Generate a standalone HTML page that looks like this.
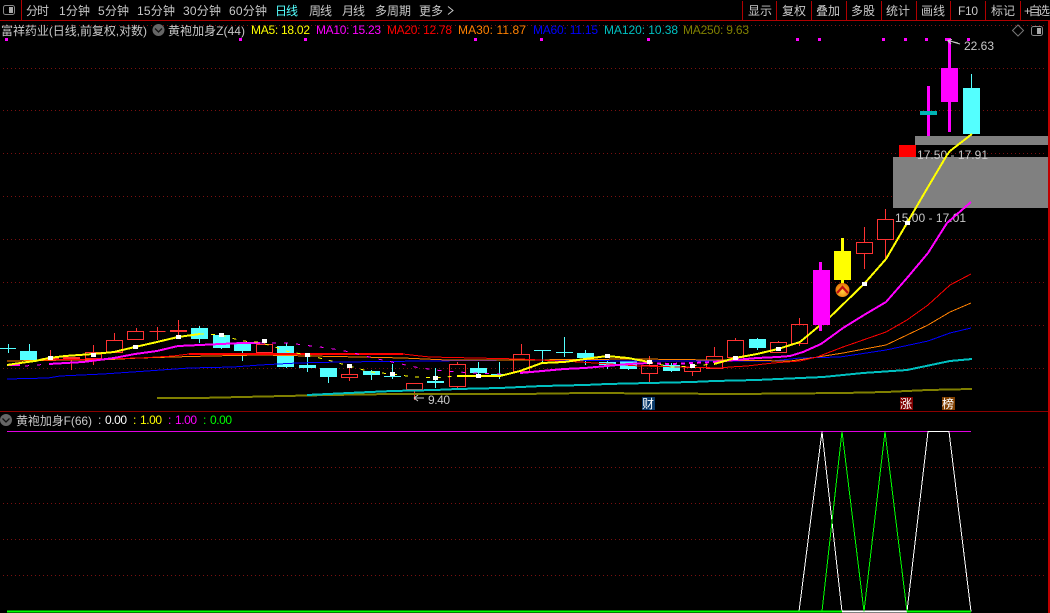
<!DOCTYPE html>
<html><head><meta charset="utf-8"><style>
html,body{margin:0;padding:0;background:#000;width:1050px;height:613px;overflow:hidden}
svg{position:absolute;left:0;top:0}
text{font-family:"Liberation Sans","WenQuanYi Zen Hei","Noto Sans CJK SC",sans-serif;font-size:12px;fill:#c8c8c8}
.m{font-size:12px}
</style></head><body>
<svg width="1050" height="613" viewBox="0 0 1050 613" xmlns="http://www.w3.org/2000/svg">
<g shape-rendering="crispEdges" fill="none">
<g stroke-width="1" stroke-dasharray="1 3">
<path d="M3 25.5H1046M3 68.5H1046M3 110.5H1046M3 153.5H1046M3 196.5H1046M3 239.5H1046M3 282.5H1046M3 325.5H1046M3 368.5H1046M3 467.5H1046M3 503.5H1046M3 539.5H1046M3 575.5H1046" stroke="#7a1010"/>
</g>
<path d="M0 20.5H1048M21.5 0V20M742.5 1V20M776.5 1V20M811.5 1V20M846.5 1V20M881.5 1V20M916.5 1V20M950.5 1V20M985.5 1V20M1020.5 1V20" stroke="#b00000"/>
<path d="M0 411.5H1048" stroke="#8c0000"/>
<rect x="1048" y="20" width="2" height="593" fill="#c00000"/>
</g>
<!-- toolbar -->
<g>
<rect x="3.5" y="5.5" width="11" height="9" rx="2" fill="none" stroke="#888"/><rect x="9" y="7" width="4" height="6" fill="#aaa"/>
<text x="26" y="15" textLength="23">分时</text>
<text x="59" y="15" textLength="31">1分钟</text>
<text x="98" y="15" textLength="31">5分钟</text>
<text x="137" y="15" textLength="38">15分钟</text>
<text x="183" y="15" textLength="38">30分钟</text>
<text x="229" y="15" textLength="38">60分钟</text>
<text x="275" y="15" textLength="23" style="fill:#54ffff">日线</text>
<text x="309" y="15" textLength="23">周线</text>
<text x="342" y="15" textLength="23">月线</text>
<text x="375" y="15" textLength="36">多周期</text>
<text x="419" y="15" textLength="24">更多</text>
<path d="M448 6.5L453 10.5L448 14.5" fill="none" stroke="#c8c8c8"/>
<text x="748" y="15" textLength="24">显示</text>
<text x="782" y="15" textLength="24">复权</text>
<text x="816" y="15" textLength="24">叠加</text>
<text x="851" y="15" textLength="24">多股</text>
<text x="886" y="15" textLength="24">统计</text>
<text x="921" y="15" textLength="24">画线</text>
<text x="958" y="15" textLength="20">F10</text>
<text x="991" y="15" textLength="24">标记</text>
<text x="1024" y="15" textLength="26">+自选</text>
</g>
<!-- info -->
<g>
<text x="1" y="35" textLength="146">富祥药业(日线,前复权,对数)</text>
<circle cx="158.5" cy="30" r="6" fill="#666"/><path d="M155 28.5L158.5 32L162 28.5" fill="none" stroke="#111" stroke-width="1.3"/>
<text x="168" y="35" textLength="77">黄袍加身Z(44)</text>
<text class="m" x="251" y="34" textLength="59" style="fill:#ffff00">MA5: 18.02</text>
<text class="m" x="316" y="34" textLength="65" style="fill:#ff00ff">MA10: 15.23</text>
<text class="m" x="387" y="34" textLength="65" style="fill:#ff0000">MA20: 12.78</text>
<text class="m" x="458" y="34" textLength="68" style="fill:#ff8000">MA30: 11.87</text>
<text class="m" x="533" y="34" textLength="65" style="fill:#0000ff">MA60: 11.15</text>
<text class="m" x="604" y="34" textLength="74" style="fill:#00c0c0">MA120: 10.38</text>
<text class="m" x="683" y="34" textLength="66" style="fill:#808000">MA250: 9.63</text>
<path d="M1018 25L1023.5 30.5L1018 36L1012.5 30.5Z" fill="none" stroke="#777"/>
<rect x="1031.5" y="26.5" width="11" height="9" rx="2" fill="none" stroke="#888"/><rect x="1037" y="28" width="4" height="6" fill="#aaa"/>
</g>
<!-- magenta top dots -->
<path shape-rendering="crispEdges" fill="#ff00ff" d="M5 38h3v3h-3zM239 38h3v3h-3zM304 38h3v3h-3zM474 38h3v3h-3zM540 38h3v3h-3zM647 38h3v3h-3zM796 38h3v3h-3zM818 38h3v3h-3zM882 38h3v3h-3zM904 38h3v3h-3zM925 38h3v3h-3zM945 38h3v3h-3zM967 38h3v3h-3z"/>
<!-- gray zones -->
<rect x="915" y="136" width="133" height="9" fill="#808080"/>
<rect x="893" y="157" width="155" height="51" fill="#808080"/>
<text class="m" x="917" y="159" textLength="71">17.50 - 17.91</text>
<text class="m" x="895" y="222" textLength="71">15.00 - 17.01</text>
<!-- regular candles -->
<g shape-rendering="crispEdges">
<path fill="none" stroke="#ff3232" d="M93.5 345V352M93.5 358V365M114.5 333V340M136.5 328V331M136.5 339V340M50.5 350V360M71.5 358V370M157.5 327V340M178.5 320V338M264.5 339V344M349.5 368V374M349.5 377V381M414.5 389V400M457.5 362V364M457.5 386V388M521.5 344V354M649.5 356V365M649.5 373V383M692.5 362V367M692.5 371V376M714.5 347V356M735.5 338V340M735.5 357V359M778.5 341V342M799.5 318V324M799.5 343V346M864.5 227V242M864.5 253V269M885.5 209V219M885.5 239V259
M85.5 352.5H101.5V358.5H85.5ZM106.5 340.5H122.5V352.5H106.5ZM127.5 331.5H143.5V339.5H127.5ZM256.5 344.5H272.5V352.5H256.5ZM341.5 374.5H357.5V377.5H341.5ZM406.5 383.5H422.5V389.5H406.5ZM449.5 364.5H465.5V386.5H449.5ZM513.5 354.5H529.5V371.5H513.5ZM641.5 365.5H657.5V373.5H641.5ZM684.5 367.5H700.5V371.5H684.5ZM706.5 356.5H722.5V368.5H706.5ZM727.5 340.5H743.5V357.5H727.5ZM770.5 342.5H786.5V352.5H770.5ZM791.5 324.5H807.5V343.5H791.5ZM856.5 242.5H872.5V253.5H856.5ZM877.5 219.5H893.5V239.5H877.5ZM149.5 331.5H165.5"/>
<path fill="#ff3232" d="M42 358h17v2h-17zM63 357h17v2h-17zM170 330h17v2h-17z"/>
<rect x="899" y="145" width="17" height="12" fill="#ff0000"/>
<path fill="none" stroke="#54ffff" d="M8.5 344V353M0 348.5H16M29.5 344V362M199.5 326V343M221.5 333V349M242.5 342V361M286.5 343V368M307.5 353V372M328.5 368V383M371.5 370V380M392.5 364V379M435.5 368V388M478.5 362V375M499.5 362V379M542.5 350V362M564.5 337V357M585.5 350V365M607.5 361V369M628.5 361V370M671.5 363V372M757.5 338V350M971.5 74V88"/>
<path fill="#54ffff" d="M20 351h17v9h-17zM191 328h17v11h-17zM213 335h17v13h-17zM234 343h17v8h-17zM277 346h17v21h-17zM299 365h17v3h-17zM320 368h17v9h-17zM363 371h17v4h-17zM384 376h17v1h-17zM427 381h17v2h-17zM470 368h17v5h-17zM491 374h17v1h-17zM534 350h17v1h-17zM556 352h17v1h-17zM577 353h17v5h-17zM599 362h17v3h-17zM620 361h17v8h-17zM663 365h17v6h-17zM749 339h17v9h-17zM963 88h17v46h-17z"/>
</g>
<!-- MA lines -->
<g fill="none" shape-rendering="crispEdges">
<polyline stroke="#808000" stroke-width="2" points="157,398 199,398 242,397 285,396 328,395 393,394 520,394 586,393 735,394 843,393 886,392 928,390 972,389"/>
<polyline stroke="#00c0c0" stroke-width="2" points="307,395 328,394 370,392 392,391 435,390 457,389 500,388 542,386 585,385 607,384 649,383 692,382 714,381 757,380 778,379 823,377 863,373 907,370 950,361 972,359"/>
<polyline stroke="#0000ff" stroke-width="1" points="7,379 48,378 60,376 103,374 147,371 189,368 233,367 260,365 297,363 340,362 427,361 520,360 639,361 773,361 800,358 840,357 886,350 928,341 950,333 971,328"/>
<polyline stroke="#ff8000" stroke-width="1" points="7,361 73,360 100,360 140,358 173,357 210,356 260,355 360,357 403,358 447,360 520,360 639,359 790,361 805,359 843,353 886,345 907,335 928,325 950,312 971,303"/>
<polyline stroke="#ff0000" stroke-width="1" points="42,360 100,359 140,358 173,356 189,354"/>
<polyline stroke="#ff0000" stroke-width="2" points="189,354 260,354 403,354"/>
<polyline stroke="#ff0000" stroke-width="1" points="403,354 420,356 430,357 520,359 580,362 639,366 720,368 730,367 747,366 773,363 800,361 817,357 843,347 886,332 907,320 928,305 950,285 971,274"/>
<polyline stroke="#ff00ff" stroke-width="2" points="7,365 20,365"/>
<polyline stroke="#ff00ff" stroke-width="1" stroke-dasharray="4 8" points="25,366 49,364"/>
<polyline stroke="#ff00ff" stroke-width="2" points="49,364 83,362 114,358 135,354 157,351 178,346 200,345 221,344 242,343 260,343"/>
<polyline stroke="#ff00ff" stroke-width="1" stroke-dasharray="4 8" points="260,343 290,343 303,345 328,348 350,352 373,358 392,362 415,367 435,370 457,372 478,373 499,374 520,373"/>
<polyline stroke="#ff00ff" stroke-width="2" points="520,373 542,371 564,369 585,368 607,366 628,364 649,363"/>
<polyline stroke="#ff00ff" stroke-width="2" stroke-dasharray="4 4" points="649,363 671,364 692,363 714,362"/>
<polyline stroke="#ff00ff" stroke-width="2" points="714,362 735,360 757,358 778,357 790,356 803,352 821,344 843,328 864,315 886,302 907,278 928,253 947,223 971,202"/>
<polyline stroke="#ffff00" stroke-width="2" points="7,365 20,363 35,361 49,358 65,356 93,354 114,352 135,347 157,342 178,337 200,334"/>
<polyline stroke="#ffff00" stroke-width="1" stroke-dasharray="4 7" points="200,334 221,335 242,341 257,342 272,346 286,351 296,353 307,355 328,360 349,366 371,372 392,374 414,377 435,378 457,376"/>
<polyline stroke="#ffff00" stroke-width="2" points="457,376 500,376 520,371 542,363 564,362 585,359 607,356 628,358 649,362"/>
<polyline stroke="#ffff00" stroke-width="1" stroke-dasharray="4 7" points="649,362 671,367 692,366 714,364"/>
<polyline stroke="#ffff00" stroke-width="2" points="714,364 735,358 757,354 778,349 800,342 830,317 864,284 886,259 907,223 928,187 947,155 950,151 972,134"/>
</g>
<!-- white markers -->
<path shape-rendering="crispEdges" fill="#fff" d="M48 356h5v4h-5zM91 353h5v4h-5zM133 345h5v4h-5zM176 335h5v4h-5zM219 333h5v4h-5zM262 339h5v4h-5zM305 353h5v4h-5zM347 364h5v4h-5zM390 372h5v4h-5zM433 376h5v4h-5zM476 374h5v4h-5zM605 354h5v4h-5zM647 360h5v4h-5zM690 364h5v4h-5zM733 356h5v4h-5zM776 347h5v4h-5zM862 282h5v4h-5zM905 221h5v4h-5z"/>
<!-- special candles -->
<g shape-rendering="crispEdges">
<path fill="#ff00ff" d="M813 270h17v55h-17zM819 262h3v69h-3zM941 68h17v34h-17zM948 38h3v94h-3zM927 86h3v50h-3z"/>
<rect x="920" y="111" width="17" height="4" fill="#00b4b4"/>
<path fill="#ffff00" d="M834 251h17v29h-17zM841 238h3v46h-3z"/>
</g>
<defs><radialGradient id="g" cx="50%" cy="60%" r="60%"><stop offset="0" stop-color="#ffd040"/><stop offset="1" stop-color="#e87000"/></radialGradient></defs>
<circle cx="842.5" cy="290" r="7" fill="url(#g)"/>
<path d="M837 293L842.5 287L848 293" fill="none" stroke="#c01010" stroke-width="2.2"/>
<!-- labels -->
<path d="M960 44L953 42M947.5 40.5L952 39.5M947.5 40.5L951 44M947.5 40.5L958 43" fill="none" stroke="#c8c8c8"/>
<text class="m" x="964" y="50" textLength="30">22.63</text>
<path d="M414 398H424M414 398L418 395M414 398L418 401" fill="none" stroke="#c8c8c8"/>
<text class="m" x="428" y="404" textLength="22">9.40</text>
<rect x="642" y="397" width="13" height="13" fill="#0a3a6a"/>
<text x="642" y="408" style="font-size:12px;fill:#fff" textLength="13">财</text>
<rect x="900" y="397" width="13" height="13" fill="#800000"/>
<text x="900" y="408" style="font-size:12px;fill:#fff" textLength="13">涨</text>
<rect x="942" y="397" width="13" height="13" fill="#804000"/>
<text x="942" y="408" style="font-size:12px;fill:#fff" textLength="13">榜</text>
<!-- lower panel -->
<circle cx="6" cy="420" r="6" fill="#666"/><path d="M2.5 418.5L6 422L9.500 418.5" fill="none" stroke="#111" stroke-width="1.3"/>
<text x="16" y="425" textLength="76">黄袍加身F(66)</text>
<text class="m" x="98" y="424">:</text><text class="m" x="105" y="424" textLength="22" style="fill:#fff">0.00</text>
<text class="m" x="133" y="424" style="fill:#ff0">:</text><text class="m" x="140" y="424" textLength="22" style="fill:#ff0">1.00</text>
<text class="m" x="168" y="424" style="fill:#f0f">:</text><text class="m" x="175" y="424" textLength="22" style="fill:#f0f">1.00</text>
<text class="m" x="203" y="424" style="fill:#0f0">:</text><text class="m" x="210" y="424" textLength="22" style="fill:#0f0">0.00</text>
<g fill="none" shape-rendering="crispEdges">
<path d="M7 431.5H971" stroke="#e000e0"/>
<polyline stroke="#ffffff" points="799,611.5 822,431.5 842,611.5 907,611.5 928,431.5 949,431.5 971,611.5"/>
<path d="M7 611.5H842M907 611.5H971" stroke="#00ff00" stroke-width="2"/>
<path d="M842 611.5H907" stroke="#ffffff" stroke-width="2"/>
<polyline stroke="#00ff00" points="822,611.5 842,431.5 864,611.5 885,431.5 907,611.5"/>
</g>
</svg>
</body></html>
